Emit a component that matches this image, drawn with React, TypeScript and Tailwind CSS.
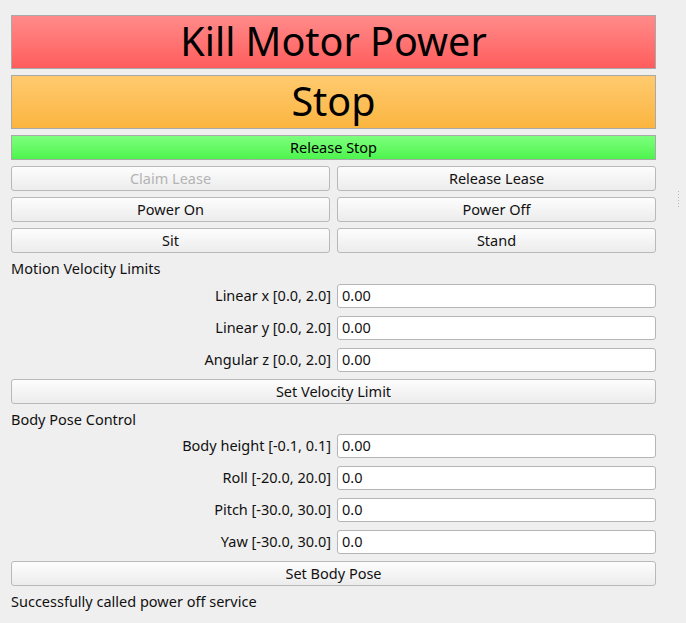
import React from "react";

const font = { fontFamily: '"Noto Sans", "DejaVu Sans", sans-serif' };

function Btn({ label, disabled }: { label: string; disabled?: boolean }) {
  return (
    <button
      className={
        "h-[25px] w-full rounded-[3px] border border-[#b9b9b9] bg-gradient-to-b from-[#fdfdfd] to-[#ececec] text-[14.5px] leading-none " +
        (disabled ? "text-[#b4b4b4]" : "text-[#111]")
      }
    >
      {label}
    </button>
  );
}

function Field({ label, value }: { label: string; value: string }) {
  return (
    <div className="flex items-center gap-[6px]">
      <div className="w-[320px] text-right text-[14.5px] text-[#111]">{label}</div>
      <div className="flex h-[24px] flex-1 items-center rounded-[3px] border border-[#b5b5b5] bg-white pl-[4px] text-[14.5px] text-[#111]">
        {value}
      </div>
    </div>
  );
}

export default function App() {
  return (
    <div className="flex h-[623px] w-[686px] bg-[#efefef]" style={font}>
      <div className="ml-[11px] mt-[15px] flex w-[645px] flex-col">
        <button className="h-[54px] w-full border border-[#a9a9a9] bg-gradient-to-b from-[#ff8a8a] to-[#ff5c5c] text-[39.5px] leading-none text-black">
          Kill Motor Power
        </button>
        <button className="mt-[6px] h-[54px] w-full border border-[#a9a9a9] bg-gradient-to-b from-[#ffca6e] to-[#fbb53e] text-[39.5px] leading-none text-black">
          Stop
        </button>
        <button className="mt-[6px] h-[25px] w-full border border-[#a9a9a9] bg-gradient-to-b from-[#7cff7c] to-[#4cf44c] text-[14.5px] leading-none text-black">
          Release Stop
        </button>

        <div className="mt-[6px] grid grid-cols-2 gap-x-[7px] gap-y-[6px]">
          <Btn label="Claim Lease" disabled />
          <Btn label="Release Lease" />
          <Btn label="Power On" />
          <Btn label="Power Off" />
          <Btn label="Sit" />
          <Btn label="Stand" />
        </div>

        <div className="mt-[6px] h-[19px] text-[14.5px] leading-[19px] text-[#111]">Motion Velocity Limits</div>
        <div className="mt-[6px] flex flex-col gap-[8px]">
          <Field label="Linear x [0.0, 2.0]" value="0.00" />
          <Field label="Linear y [0.0, 2.0]" value="0.00" />
          <Field label="Angular z [0.0, 2.0]" value="0.00" />
        </div>
        <div className="mt-[7px]">
          <Btn label="Set Velocity Limit" />
        </div>

        <div className="mt-[6px] h-[18px] text-[14.5px] leading-[18px] text-[#111]">Body Pose Control</div>
        <div className="mt-[6px] flex flex-col gap-[8px]">
          <Field label="Body height [-0.1, 0.1]" value="0.00" />
          <Field label="Roll [-20.0, 20.0]" value="0.0" />
          <Field label="Pitch [-30.0, 30.0]" value="0.0" />
          <Field label="Yaw [-30.0, 30.0]" value="0.0" />
        </div>
        <div className="mt-[7px]">
          <Btn label="Set Body Pose" />
        </div>
        <div className="mt-[6px] h-[18px] text-[14.5px] leading-[18px] text-[#111]">
          Successfully called power off service
        </div>
      </div>

      <div className="ml-[22px] mt-[191px] flex flex-col gap-[2px]">
        {[0, 1, 2, 3, 4, 5].map((i) => (
          <div key={i} className="h-[1px] w-[1px] bg-[#b8b8b8]" />
        ))}
      </div>
    </div>
  );
}
